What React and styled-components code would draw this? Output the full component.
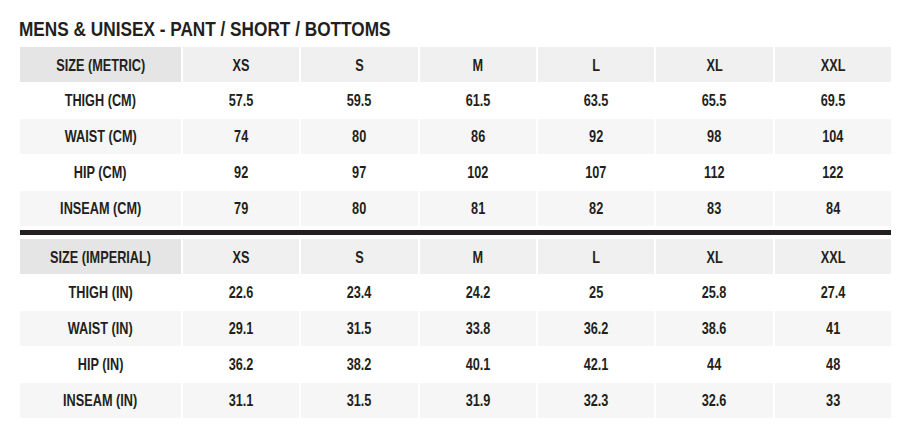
import React from 'react';
import styled, { createGlobalStyle } from 'styled-components';

const GlobalStyle = createGlobalStyle`
  html, body {
    margin: 0;
    padding: 0;
    background: #ffffff;
  }
  body {
    font-family: "Liberation Sans Narrow", "Liberation Sans", Arial, sans-serif;
    color: #231f20;
  }
`;

const Page = styled.div`
  width: 908px;
  height: 429px;
  padding: 0 17px 0 20px;
  box-sizing: border-box;
`;

const Title = styled.h1`
  margin: 0 0 0 -1px;
  padding-top: 17px;
  height: 30px;
  font-size: 21px;
  line-height: 24px;
  font-weight: 700;
  color: #231f20;
  white-space: nowrap;
`;

// no narrow face is installed, so the condensed look comes from a horizontal squeeze
const Narrow = styled.span`
  display: inline-block;
  white-space: nowrap;
  transform: scaleX(${props => props.$squeeze || 0.77});
  transform-origin: ${props => (props.$left ? 'left center' : 'center center')};
`;

const Table = styled.div`
  display: grid;
  grid-template-columns: 161px repeat(6, 1fr);
  column-gap: 2px;
  row-gap: 1px;
`;

const Cell = styled.div`
  height: 35px;
  display: flex;
  align-items: center;
  justify-content: center;
  padding-top: ${props => (props.$tone === 'label' || props.$tone === 'head' ? '2px' : '0')};
  box-sizing: border-box;
  font-size: 16.5px;
  font-weight: 700;
  color: #231f20;
  background: ${props =>
    props.$tone === 'label' ? '#e5e5e6' :
    props.$tone === 'head' ? '#f0f0f0' :
    props.$tone === 'shade' ? '#f6f6f6' : '#ffffff'};
`;

const Divider = styled.div`
  height: 5px;
  margin: 4px 0 4px;
  background: #231f20;
`;

const sizes = ['XS', 'S', 'M', 'L', 'XL', 'XXL'];

const metric = [
  ['THIGH (CM)', '57.5', '59.5', '61.5', '63.5', '65.5', '69.5'],
  ['WAIST (CM)', '74', '80', '86', '92', '98', '104'],
  ['HIP (CM)', '92', '97', '102', '107', '112', '122'],
  ['INSEAM (CM)', '79', '80', '81', '82', '83', '84'],
];

const imperial = [
  ['THIGH (IN)', '22.6', '23.4', '24.2', '25', '25.8', '27.4'],
  ['WAIST (IN)', '29.1', '31.5', '33.8', '36.2', '38.6', '41'],
  ['HIP (IN)', '36.2', '38.2', '40.1', '42.1', '44', '48'],
  ['INSEAM (IN)', '31.1', '31.5', '31.9', '32.3', '32.6', '33'],
];

function SizeTable({ label, rows }) {
  return (
    <Table>
      <Cell $tone="label"><Narrow>{label}</Narrow></Cell>
      {sizes.map(s => <Cell key={s} $tone="head"><Narrow>{s}</Narrow></Cell>)}
      {rows.map((row, i) =>
        row.map((v, j) => (
          <Cell key={`${i}-${j}`} $tone={i % 2 === 1 ? 'shade' : 'plain'}>
            <Narrow>{v}</Narrow>
          </Cell>
        ))
      )}
    </Table>
  );
}

export default function App() {
  return (
    <Page>
      <GlobalStyle />
      <Title><Narrow $left $squeeze={0.82}>MENS &amp; UNISEX - PANT / SHORT / BOTTOMS</Narrow></Title>
      <SizeTable label="SIZE (METRIC)" rows={metric} />
      <Divider />
      <SizeTable label="SIZE (IMPERIAL)" rows={imperial} />
    </Page>
  );
}
